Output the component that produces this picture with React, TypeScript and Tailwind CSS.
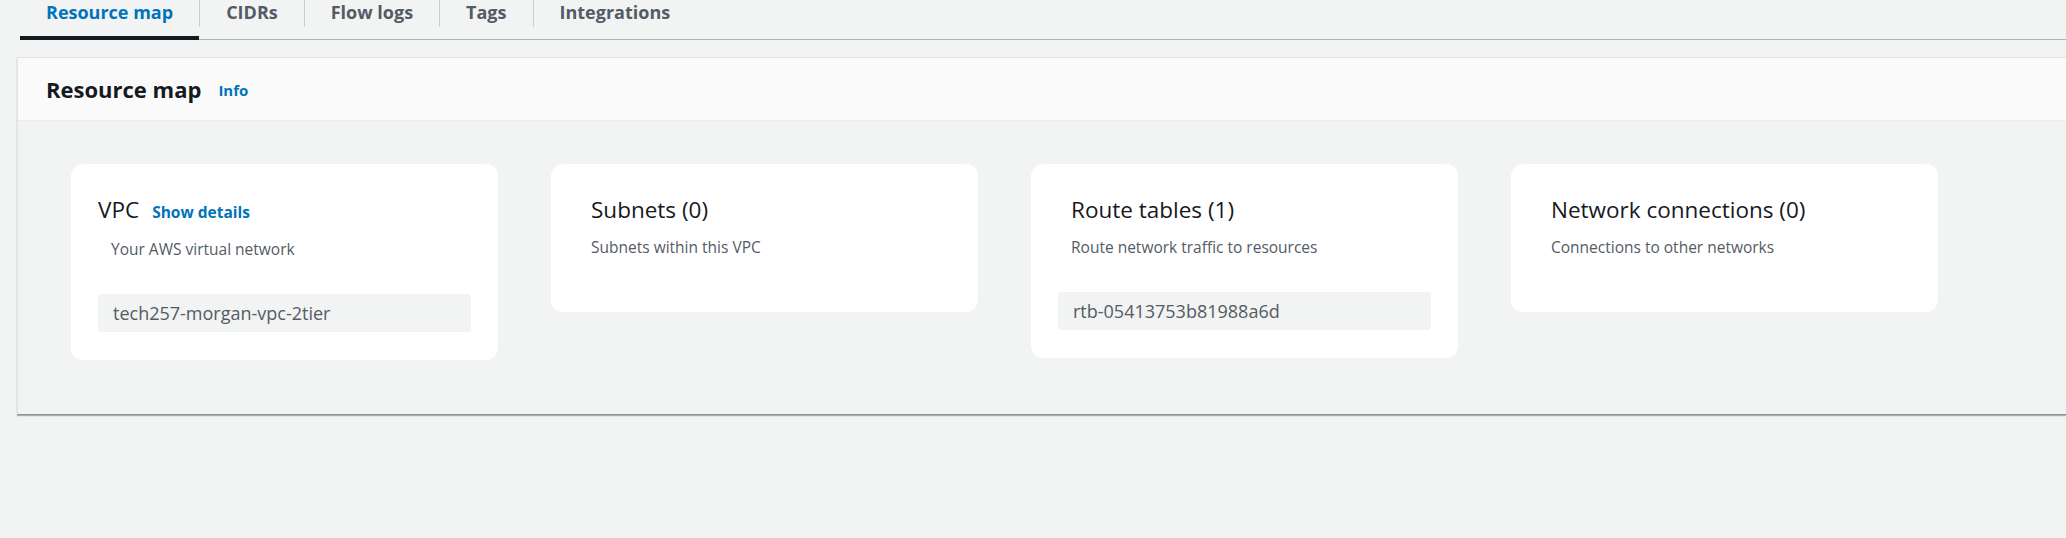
import React from "react";

const tabs = ["Resource map", "CIDRs", "Flow logs", "Tags", "Integrations"];

function Card({
  title,
  link,
  desc,
  descIndent,
  value,
  titlePad,
}: {
  title: string;
  link?: string;
  desc: string;
  descIndent?: boolean;
  value?: string;
  titlePad: "vpc" | "std";
}) {
  return (
    <div className="flex w-[427px] shrink-0 flex-col rounded-[12px] bg-white pt-[32px] pb-[28px] px-[27px]">
      <div className={`flex items-baseline gap-[13px] ${titlePad === "std" ? "pl-[13px]" : ""}`}>
        <span className="text-[22.5px] leading-[28px] text-[#16191f]">{title}</span>
        {link && <span className="text-[15.5px] font-bold leading-[28px] text-[#0073bb]">{link}</span>}
      </div>
      <div className={`mt-[12px] mb-[26px] text-[15.5px] leading-[22px] text-[#545b64] ${descIndent || titlePad === "std" ? "pl-[13px]" : ""}`}>
        {desc}
      </div>
      {value && (
        <div className="mt-[8px] flex h-[38px] items-center rounded-[3px] bg-[#f2f3f3] px-[15px] text-[18px] text-[#545b64]">
          {value}
        </div>
      )}
    </div>
  );
}

export default function App() {
  return (
    <div
      className="h-[538px] w-[2066px] overflow-hidden bg-[#f2f3f3]"
      style={{ fontFamily: '"Open Sans", "Noto Sans", sans-serif' }}
    >
      {/* Tabs */}
      <div className="ml-[20px] flex h-[40px] items-stretch border-b border-[#aab7b8]">
        {tabs.map((t, i) => (
          <React.Fragment key={t}>
            {i > 0 && <div className="h-[27px] w-px bg-[#c8cdd0]" />}
            <div
              className={`-mb-px flex h-[40px] items-start px-[26px] pt-0 text-[18px] font-bold leading-[24px] ${
                i === 0 ? "border-b-[4px] border-[#16191f] text-[#0073bb]" : "text-[#545b64]"
              }`}
            >
              {t}
            </div>
          </React.Fragment>
        ))}
      </div>

      {/* Panel */}
      <div className="ml-[17px] mt-[17px] border-l border-t border-[#dfe3e3] shadow-[0_1px_1px_0_rgba(0,28,36,0.3)] border-b border-b-[#879596]">
        <div className="flex h-[63px] items-center gap-[17px] border-b border-[#eaeded] bg-[#fafafa] pl-[28px]">
          <span className="text-[22px] font-bold leading-[28px] text-[#16191f]">Resource map</span>
          <span className="mt-[3px] text-[15px] font-bold text-[#0073bb]">Info</span>
        </div>
        <div className="flex items-start gap-[53px] bg-[#f2f3f3] pl-[53px] pt-[43px] pb-[54px]">
          <Card
            title="VPC"
            link="Show details"
            desc="Your AWS virtual network"
            descIndent
            value="tech257-morgan-vpc-2tier"
            titlePad="vpc"
          />
          <Card title="Subnets (0)" desc="Subnets within this VPC" titlePad="std" />
          <Card
            title="Route tables (1)"
            desc="Route network traffic to resources"
            value="rtb-05413753b81988a6d"
            titlePad="std"
          />
          <Card title="Network connections (0)" desc="Connections to other networks" titlePad="std" />
        </div>
      </div>
    </div>
  );
}
